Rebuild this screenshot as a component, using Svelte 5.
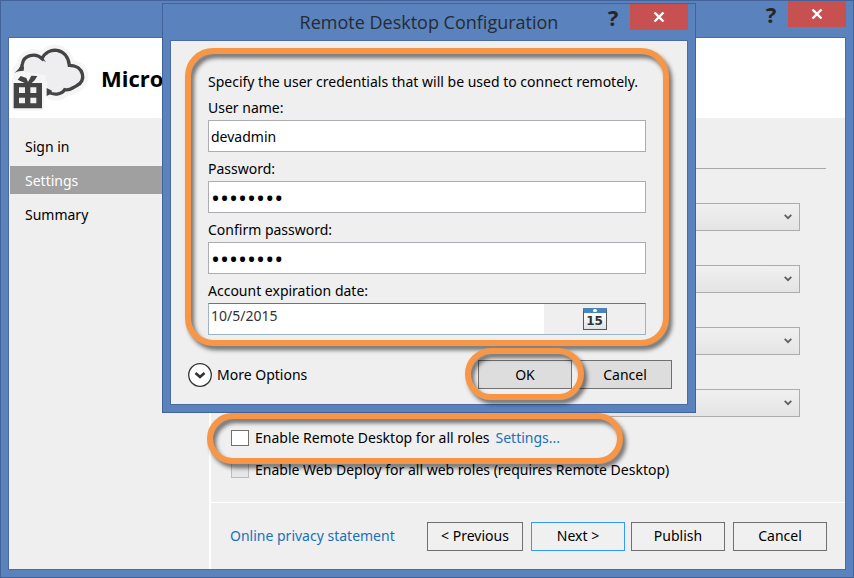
<script>
  const steps = [
    { name: 'Sign in', active: false },
    { name: 'Settings', active: true },
    { name: 'Summary', active: false },
  ];
  const choices = ['Cloud service', 'Environment', 'Build configuration', 'Service configuration'];

  let userName = $state('devadmin');
  let password = $state('password');
  let confirmation = $state('password');
  let expires = $state('10/5/2015');
</script>

{#snippet captionButtons()}
  <div class="caption">
    <button class="help" type="button" aria-label="Help">?</button>
    <button class="close" type="button" aria-label="Close">
      <svg viewBox="0 0 12 10" width="12" height="10" aria-hidden="true">
        <path d="M1.5 0.5 L10.5 9.5 M10.5 0.5 L1.5 9.5" stroke="#fff" stroke-width="2.4" />
      </svg>
    </button>
  </div>
{/snippet}

<div class="window">
  <div class="titlebar">{@render captionButtons()}</div>

  <div class="client">
    <header>
      <svg class="logo" viewBox="30 120 246 231" width="82" height="77" aria-hidden="true">
        <g fill="none" stroke="#f5f5f5" stroke-width="36" stroke-linejoin="round" stroke-linecap="round">
          <path d="M54 214 C60 205 66 200 68 192 C72 168 106 156 127 176 C143 141 201 142 207 197 C248 196 262 243 229 258 C216 264 212 274 194 270 C184 286 160 288 148 276" fill="#f5f5f5" />
          <path d="M50 240 H118 V318 H50 Z" stroke-width="30" fill="#f5f5f5" />
        </g>
        <path d="M68 192 C72 168 106 156 127 176 C143 141 201 142 207 197 C248 196 262 243 229 258 C216 264 212 274 194 270 C184 286 160 288 146 276 L136 226 L68 215 Z" fill="#eeeef0" />
        <path d="M66 209 C64 202 66 197 67 192 C71 168 104 155 126 176 C142 139 202 140 208 196 C253 196 260 245 230 257 C216 263 211 273 194 269 C184 285 160 286 146 276" fill="none" stroke="#444" stroke-width="10" />
        <path d="M43 219 C53 211 58 205 62 196 L72 200 L71 212 C62 212 50 214 43 219 Z M140 264 L140 288 L151 283 L156 272 Z M120 177 L131 176 L139 188 C134 183 128 181 120 177 Z" fill="#444" />
        <path d="M41 249 H74 L53 239 L62 228 L79 234 L84 246 L94 227 L112 228 L104 241 L95 249 H126 V325 H41 Z" fill="#444" />
        <path d="M57 262 H75 V279 H57 Z M91 262 H109 V279 H91 Z M57 293 H75 V310 H57 Z M91 293 H109 V310 H91 Z" fill="#f1f1f1" />
      </svg>
      <h1>Micro</h1>
    </header>

    <div class="columns">
      <nav>
        {#each steps as step}
          <a href="#step" class:active={step.active}>{step.name}</a>
        {/each}
      </nav>

      <main>
        <section class="settings">
          <hr />
          {#each choices as choice}
            <div class="choice">
              <select aria-label={choice}><option></option></select>
              <svg viewBox="0 0 8 6" width="8" height="6" aria-hidden="true">
                <path d="M0.7 0.8 L4 4.2 L7.3 0.8" fill="none" stroke="#606060" stroke-width="1.8" />
              </svg>
            </div>
          {/each}
          <div class="check first">
            <input type="checkbox" id="remote" />
            <label for="remote">Enable Remote Desktop for all roles</label>
            <a href="#settings">Settings...</a>
            <span class="marker remote-marker"></span>
          </div>
          <div class="check">
            <input type="checkbox" id="deploy" disabled />
            <label for="deploy">Enable Web Deploy for all web roles (requires Remote Desktop)</label>
          </div>
        </section>

        <footer>
          <a href="#privacy">Online privacy statement</a>
          <div class="pair">
            <button type="button" class="previous">&lt; Previous</button>
            <button type="button" class="primary">Next &gt;</button>
          </div>
          <div class="pair">
            <button type="button">Publish</button>
            <button type="button">Cancel</button>
          </div>
        </footer>
      </main>
    </div>
  </div>

  <div class="dialog" role="dialog" aria-labelledby="dialog-title">
    <div class="titlebar">
      <h2 id="dialog-title">Remote Desktop Configuration</h2>
      {@render captionButtons()}
    </div>
    <form class="panel">
      <div class="fields">
        <p>Specify the user credentials that will be used to connect remotely.</p>
        <label for="user">User name:</label>
        <input id="user" type="text" bind:value={userName} />
        <label for="pass">Password:</label>
        <input id="pass" type="password" bind:value={password} />
        <label for="confirm">Confirm password:</label>
        <input id="confirm" type="password" bind:value={confirmation} />
        <label for="expires">Account expiration date:</label>
        <div class="date">
          <input id="expires" type="text" bind:value={expires} />
          <button type="button" aria-label="Choose a date">
            <span class="calendar">15</span>
          </button>
        </div>
        <span class="marker fields-marker"></span>
      </div>
      <div class="actions">
        <button type="button" class="more">
          <svg viewBox="0 0 24 24" width="24" height="24" aria-hidden="true">
            <circle cx="12" cy="12" r="11.3" fill="#fff" stroke="#333" stroke-width="1.3" />
            <path d="M7.5 10 L12 14 L16.5 10" fill="none" stroke="#333" stroke-width="2.6" />
          </svg>
          More Options
        </button>
        <div class="ok">
          <button type="button">OK</button>
          <span class="marker ok-marker"></span>
        </div>
        <button type="button">Cancel</button>
      </div>
    </form>
  </div>
</div>

<style>
  :global(body) {
    margin: 0;
  }

  .window,
  .window * {
    box-sizing: border-box;
  }

  .window {
    position: relative;
    display: flex;
    flex-direction: column;
    min-height: 100vh;
    padding: 0 7px 7px;
    border: 1px solid #43629a;
    background: #5a82bd;
    color: #000;
    font: 14px/20px "Noto Sans", "Open Sans", sans-serif;
  }

  button,
  input,
  select {
    margin: 0;
    font: inherit;
    color: inherit;
    border-radius: 0;
  }

  a {
    color: #1a70bd;
    text-decoration: none;
  }

  h1,
  h2,
  p {
    margin: 0;
  }

  .titlebar {
    position: relative;
    flex: none;
    height: 36px;
  }

  .titlebar h2 {
    padding-top: 4px;
    font-family: "Open Sans", sans-serif;
    font-size: 18px;
    line-height: 28px;
    font-weight: 400;
    text-align: center;
    color: #262b33;
  }

  .caption {
    position: absolute;
    top: 0;
    right: 0;
    display: flex;
  }

  .caption button {
    border: 0;
    padding: 0;
    height: 26px;
  }

  .help {
    width: 34px;
    background: none;
    font: bold 22px/26px "Noto Sans", sans-serif;
    color: #262626;
  }

  .close {
    display: flex;
    align-items: center;
    justify-content: center;
    width: 58px;
    background: #c75050;
  }

  .client {
    flex: 1;
    display: flex;
    flex-direction: column;
    border: 1px solid #4a6ca6;
    background: #efefef;
  }

  header {
    display: flex;
    align-items: center;
    height: 80px;
    padding-left: 1px;
    background: #fff;
  }

  h1 {
    margin-left: 9px;
    font-family: "Open Sans", sans-serif;
    font-size: 22px;
    line-height: 30px;
    font-weight: 700;
  }

  .columns {
    flex: 1;
    display: flex;
  }

  nav {
    flex: none;
    display: flex;
    flex-direction: column;
    gap: 6px;
    width: 202px;
    padding: 14px 0 0 1px;
    border-right: 2px solid #fff;
  }

  nav a {
    padding: 1px 15px 0;
    line-height: 27px;
    color: #000;
  }

  nav a.active {
    background: #a0a0a0;
    color: #fff;
  }

  main {
    flex: 1;
    display: flex;
    flex-direction: column;
  }

  .settings {
    flex: 1;
    padding: 50px 19px 10px;
  }

  hr {
    height: 1px;
    margin: 0 0 34px;
    border: 0;
    background: #a8a8a8;
  }

  .choice {
    position: relative;
    margin: 0 26px 34px 0;
    height: 28px;
  }

  .choice select {
    display: block;
    width: 100%;
    height: 28px;
    appearance: none;
    border: 1px solid #acacac;
    background: linear-gradient(#f0f0f0, #e4e4e4);
  }

  .choice svg {
    position: absolute;
    top: 11px;
    right: 8px;
  }

  .check {
    position: relative;
    display: flex;
    align-items: center;
    height: 24px;
    margin-bottom: 8px;
  }

  .check.first {
    margin-top: -25px;
  }

  .check input {
    flex: none;
    appearance: none;
    width: 18px;
    height: 16px;
    margin: 0 6px 0 1px;
    border: 1px solid #707070;
    background: #fff;
  }

  .check input:disabled {
    border-color: #bcbcbc;
    background: #e6e6e6;
  }

  .check a {
    margin-left: 6px;
  }

  footer {
    display: flex;
    align-items: center;
    gap: 6px;
    height: 67px;
    padding: 0 18px 0 19px;
    border-top: 1px solid #fff;
  }

  footer > a {
    flex: 1;
  }

  .pair {
    display: flex;
    gap: 8px;
  }

  .pair button,
  .actions button {
    width: 94px;
    height: 29px;
    padding: 0;
    border: 1px solid #707070;
    background: #f0f0f0;
  }

  .pair .previous {
    width: 96px;
  }

  .pair .primary {
    border-color: #3399ff;
  }

  .dialog {
    position: absolute;
    z-index: 1;
    top: 2px;
    left: 161px;
    right: 157px;
    padding: 0 7px 7px;
    border: 1px solid #43629a;
    background: #5a82bd;
  }

  .panel {
    border: 1px solid #4a6ca6;
    background: #efefef;
    padding: 31px 15px 15px 17px;
  }

  .fields {
    position: relative;
    display: flex;
    flex-direction: column;
    margin: 0 26px 0 20px;
  }

  .fields p {
    margin-bottom: -1px;
    white-space: nowrap;
  }

  .fields label {
    margin: 7px 0 2px;
  }

  .fields > input {
    height: 32px;
    padding: 0 2px;
    border: 1px solid #abadb3;
    background: #fff;
  }

  .fields > input[type="password"] {
    font-size: 24px;
    font-family: "Open Sans", sans-serif;
  }

  .date {
    display: flex;
    height: 32px;
    border: 1px solid #9fb3c4;
    border-top-color: #5f7890;
  }

  .date input {
    flex: 1;
    min-width: 0;
    padding: 0 2px 6px;
    border: 0;
    background: #fff;
    color: #333;
  }

  .date button {
    display: flex;
    align-items: center;
    justify-content: center;
    width: 101px;
    padding: 0;
    border: 0;
    background: #efefef;
  }

  .calendar {
    position: relative;
    width: 24px;
    height: 22px;
    border: 1px solid #555;
    border-top: 5px solid #4785bf;
    background: linear-gradient(#fff, #dde3e6);
    font: bold 12px/17px "DejaVu Sans", sans-serif;
    text-align: center;
    color: #333;
  }

  .calendar::before {
    content: "";
    position: absolute;
    top: -4px;
    left: 9px;
    width: 4px;
    height: 3px;
    border-radius: 2px;
    background: #fff;
  }

  .actions {
    display: flex;
    align-items: center;
    gap: 6px;
    margin-top: 25px;
  }

  .actions button {
    background: #dddddd;
  }

  .actions .more {
    display: flex;
    align-items: center;
    gap: 5px;
    width: auto;
    margin-right: auto;
    border: 0;
    background: none;
  }

  .ok {
    position: relative;
  }

  .marker {
    position: absolute;
    border: 6px solid #f79646;
    border-radius: 28px;
    filter: drop-shadow(3px 4px 2px rgba(0, 0, 0, 0.55));
    pointer-events: none;
  }

  .fields-marker {
    inset: -24px -23px -11px;
  }

  .ok-marker {
    inset: -12px -12px -11px -13px;
  }

  .remote-marker {
    z-index: 2;
    top: -13px;
    bottom: -14px;
    left: -23px;
    width: 416px;
  }
</style>
